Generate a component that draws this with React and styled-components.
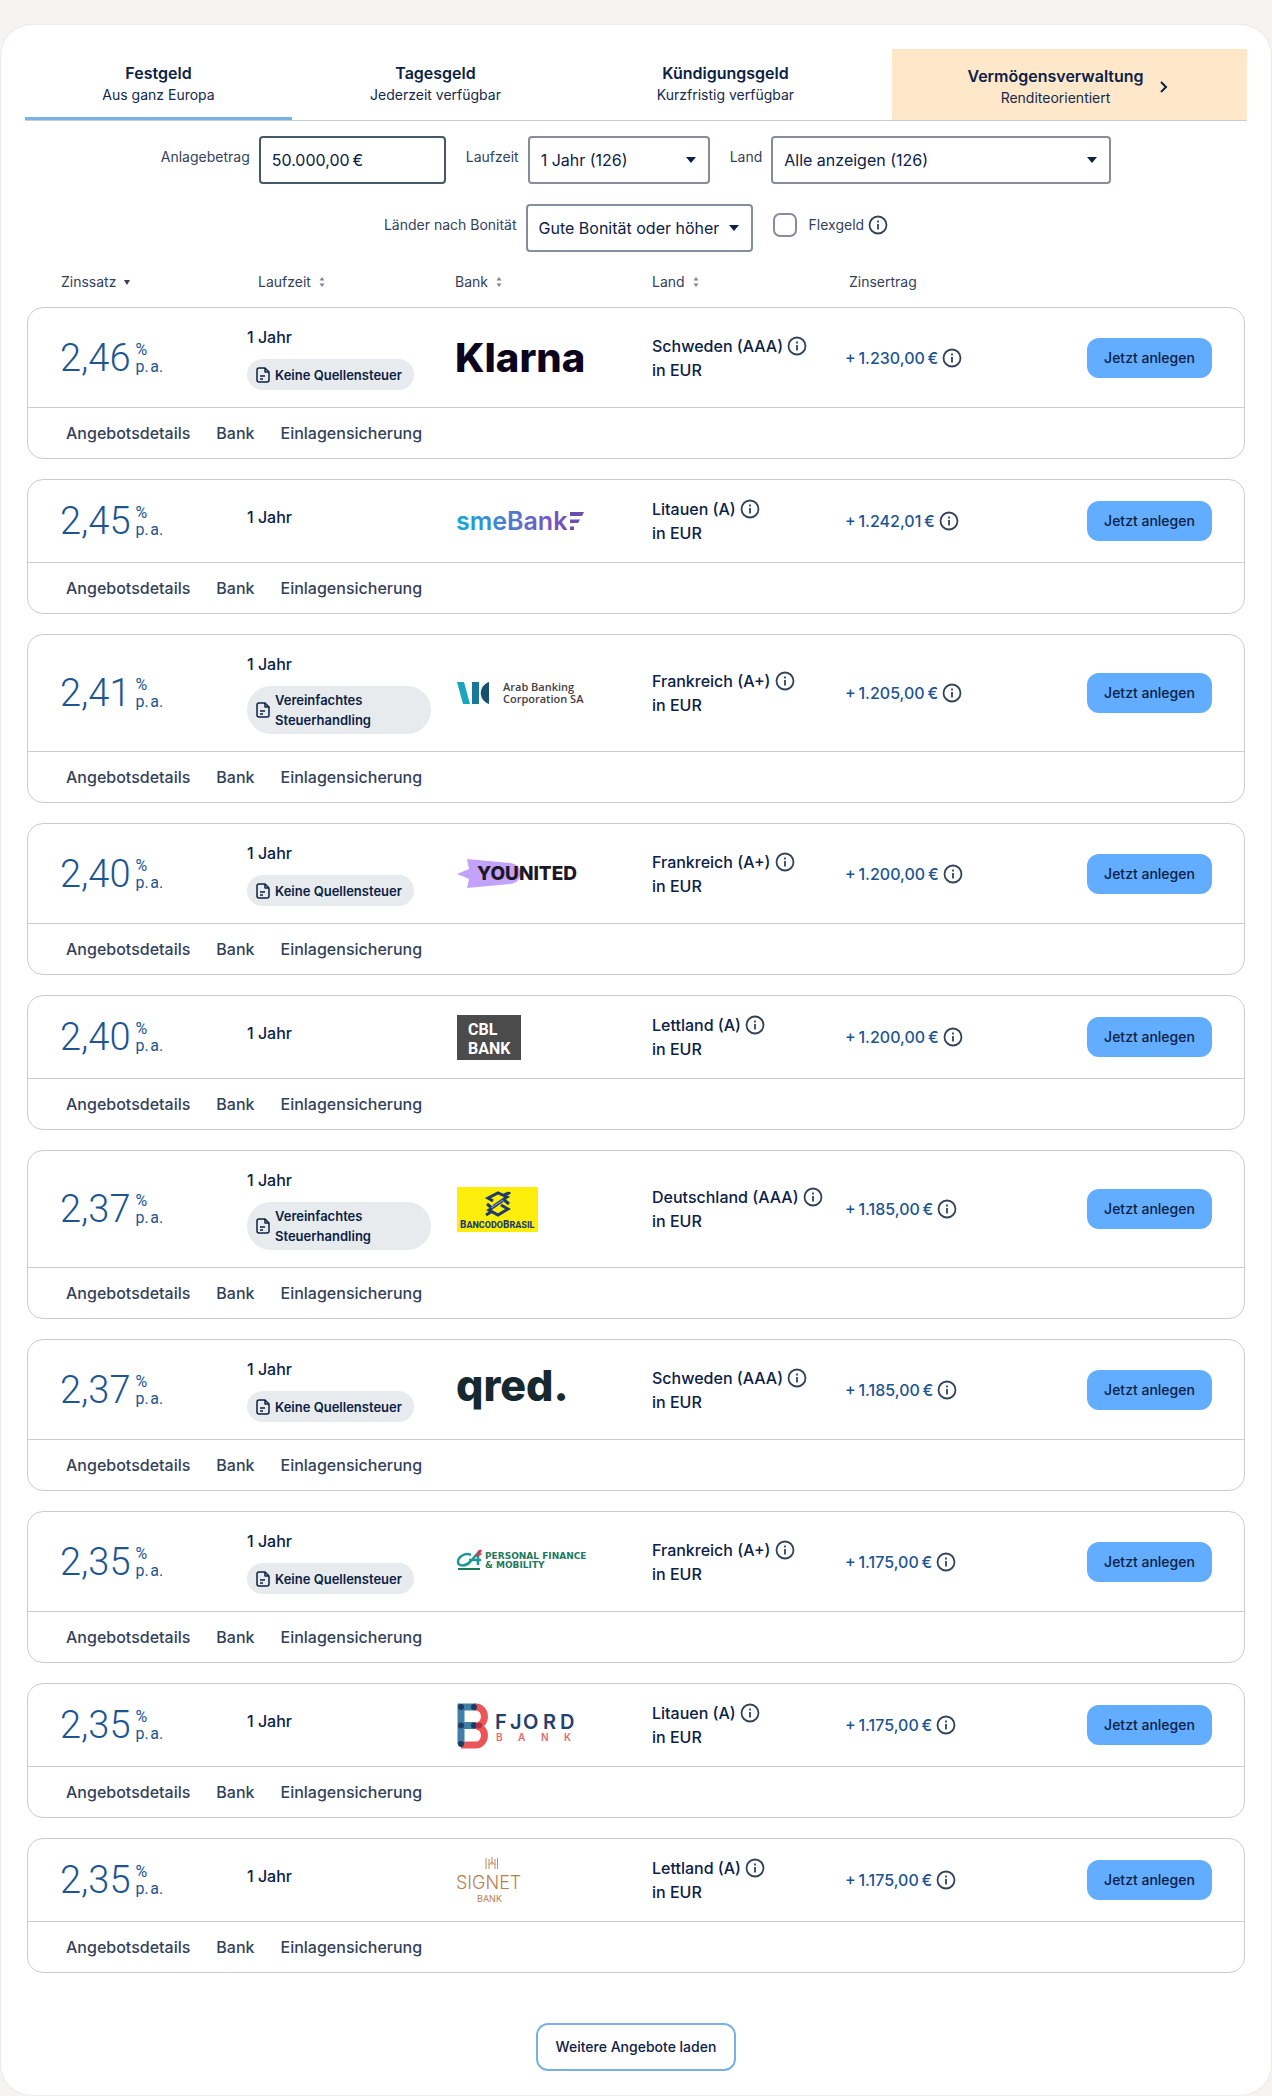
import React, { useState } from 'react'
import styled, { createGlobalStyle, css } from 'styled-components'

const offers = [
  { rate: '2,46', badge: 'Keine Quellensteuer', bank: 'Klarna', country: 'Schweden (AAA)', amount: '+\u20091.230,00\u2009€' },
  { rate: '2,45', bank: 'smeBank', country: 'Litauen (A)', amount: '+\u20091.242,01\u2009€' },
  { rate: '2,41', badge: 'Vereinfachtes Steuerhandling', bank: 'Arab Banking Corporation SA', country: 'Frankreich (A+)', amount: '+\u20091.205,00\u2009€' },
  { rate: '2,40', badge: 'Keine Quellensteuer', bank: 'Younited', country: 'Frankreich (A+)', amount: '+\u20091.200,00\u2009€' },
  { rate: '2,40', bank: 'CBL Bank', country: 'Lettland (A)', amount: '+\u20091.200,00\u2009€' },
  { rate: '2,37', badge: 'Vereinfachtes Steuerhandling', bank: 'Banco do Brasil', country: 'Deutschland (AAA)', amount: '+\u20091.185,00\u2009€' },
  { rate: '2,37', badge: 'Keine Quellensteuer', bank: 'qred', country: 'Schweden (AAA)', amount: '+\u20091.185,00\u2009€' },
  { rate: '2,35', badge: 'Keine Quellensteuer', bank: 'Personal Finance & Mobility', country: 'Frankreich (A+)', amount: '+\u20091.175,00\u2009€' },
  { rate: '2,35', bank: 'Fjord Bank', country: 'Litauen (A)', amount: '+\u20091.175,00\u2009€' },
  { rate: '2,35', bank: 'Signet Bank', country: 'Lettland (A)', amount: '+\u20091.175,00\u2009€' },
]

const tabs = [
  { title: 'Festgeld', text: 'Aus ganz Europa' },
  { title: 'Tagesgeld', text: 'Jederzeit verfügbar' },
  { title: 'Kündigungsgeld', text: 'Kurzfristig verfügbar' },
]

const logos = {
  Klarna: (
    <svg width="132" height="45" viewBox="0 0 132 45">
      <text x="-2" y="37" fontFamily="Inter" fontSize="40" fontWeight="800" fill="#0b051d">Klarna</text>
    </svg>
  ),
  smeBank: (
    <svg width="127" height="45" viewBox="0 0 127 45">
      <defs>
        <linearGradient id="sme" gradientUnits="userSpaceOnUse" x1="0" y1="0" x2="127" y2="0">
          <stop offset="0" stopColor="#12a9da" />
          <stop offset="0.5" stopColor="#5a72cc" />
          <stop offset="0.75" stopColor="#7a55be" />
          <stop offset="1" stopColor="#5e4aa8" />
        </linearGradient>
      </defs>
      <text x="-1" y="31" fontFamily="Inter" fontSize="25" fontWeight="600" fill="url(#sme)">smeBank</text>
      <path d="M113 13h14l-2 4h-12zM117 20.500h6l-2 3.500h-8v-3.500zM113 27.500h4v3.500h-4z" fill="#6a4fb3" />
    </svg>
  ),
  'Arab Banking Corporation SA': (
    <svg width="128" height="45" viewBox="0 0 128 45">
      <path d="M0 11h7l6 22H6z" fill="#1aa5bd" />
      <path d="M15 11h7v22h-7z" fill="#17789a" />
      <path d="M32 11v22C21 29 21 15 32 11z" fill="#15506f" />
      <text x="46" y="20" fontFamily="Open Sans" fontSize="11" fontWeight="600" fill="#45403f">Arab Banking</text>
      <text x="46" y="32" fontFamily="Open Sans" fontSize="11" fontWeight="600" fill="#45403f">Corporation SA</text>
    </svg>
  ),
  Younited: (
    <svg width="130" height="45" viewBox="0 0 130 45">
      <path d="M0 23l12-5-2-10 43 4c14 1 14 20 0 21l-43 4 2-9z" fill="#c3a2fa" />
      <text x="20" y="29" fontFamily="Inter" fontSize="19" fontWeight="800" fill="#1c1826">YOUNITED</text>
    </svg>
  ),
  'CBL Bank': (
    <svg width="64" height="45" viewBox="0 0 64 45">
      <path d="M0 0h64v45H0z" fill="#4b4b4b" />
      <text x="11" y="20" fontFamily="Roboto" fontSize="16" fontWeight="700" fill="#fff">CBL</text>
      <text x="11" y="39" fontFamily="Roboto" fontSize="16" fontWeight="700" fill="#fff">BANK</text>
    </svg>
  ),
  'Banco do Brasil': (
    <svg width="81" height="45" viewBox="0 0 81 45">
      <path d="M0 0h81v45H0z" fill="#fcee0a" />
      <g fill="none" stroke="#1f3a6e" strokeWidth="3">
        <path d="M36 14l-5-3 10-5 9 4-13 9" />
        <path d="M44 18l7 4-10 6-9-5 13-9" />
        <path d="M47 8l5-2v-1M34 25l-5 3" />
        <path d="M30 17l5 4M46 12l6 5" />
      </g>
      <path d="M34 21l12-8" stroke="#6d8fbf" strokeWidth="1.500" />
      <text x="3" y="41" fontFamily="Roboto" fontWeight="800" fill="#1f3a6e">
        <tspan fontSize="10">B</tspan><tspan fontSize="9">ANCODO</tspan><tspan fontSize="10">B</tspan><tspan fontSize="9">RASIL</tspan>
      </text>
    </svg>
  ),
  qred: (
    <svg width="127" height="46" viewBox="0 0 127 46">
      <text x="-1" y="34" fontFamily="Inter" fontSize="43" fontWeight="800" fill="#15292e">qred.</text>
    </svg>
  ),
  'Personal Finance & Mobility': (
    <svg width="130" height="45" viewBox="0 0 130 45">
      <path d="M14 16c-6-3-13 2-13 7 0 4 7 5 12 0l8-9v12M12 21h12" fill="none" stroke="#1a9a96" strokeWidth="2.500" />
      <path d="M20 14c1-3 3-4 5-3l-2 4z" fill="#e0304a" />
      <path d="M18 16l7-2-1 2-6 2z" fill="#e0304a" />
      <path d="M1 29h22v2H1z" fill="#1d7a5c" />
      <text x="28" y="20" fontFamily="DejaVu Sans" fontSize="9" fontWeight="700" fill="#1d7a5c">PERSONAL FINANCE</text>
      <text x="28" y="29" fontFamily="DejaVu Sans" fontSize="9" fontWeight="700" fill="#1d7a5c">&amp; MOBILITY</text>
    </svg>
  ),
  'Fjord Bank': (
    <svg width="127" height="45" viewBox="0 0 127 45">
      <g fill="none" strokeWidth="7">
        <path d="M17 4h2a8 9 0 0 1 0 19 8 9 0 0 1 0 19H4" stroke="#ec5558" />
        <path d="M19 4H4v37M4 22.500h15" stroke="#3f7fa8" />
      </g>
      <g fill="#1c3c63">
        <circle cx="4" cy="4" r="3" />
        <circle cx="17" cy="4" r="3" />
        <circle cx="4" cy="22.500" r="3" />
        <circle cx="17" cy="22.500" r="3" />
        <circle cx="4" cy="41" r="3" />
      </g>
      <circle cx="22" cy="22.500" r="3" fill="#b92e45" />
      <text x="38 53 66 86 103" y="26" fontFamily="Inter" fontSize="20" fontWeight="600" fill="#24406b">FJORD</text>
      <text x="39 61 84 107" y="38" fontFamily="Inter" fontSize="10" fontWeight="600" fill="#e8696c">BANK</text>
    </svg>
  ),
  'Signet Bank': (
    <svg width="127" height="46" viewBox="0 0 127 46">
      <path d="M29 1v11M32 2v10M35 0v8M38 2v10M40.500 1v11M32 8l3-3 3 3" stroke="#c08a5c" strokeWidth="1" fill="none" />
      <text x="-1" y="32" fontFamily="Inter" fontSize="18" fontWeight="300" fill="#b87f50">SIGNET</text>
      <text x="20" y="45" fontFamily="Inter" fontSize="9" fontWeight="400" fill="#b87f50">BANK</text>
    </svg>
  ),
}

const InfoIcon = () => (
  <svg width="20" height="20" viewBox="0 0 20 20" fill="none" stroke="#33425a" strokeWidth="1.800">
    <circle cx="10" cy="10" r="8.500" />
    <path d="M10 9v5.500M10 5.500v2" />
  </svg>
)

const DocIcon = () => (
  <svg width="14" height="16" viewBox="0 0 14 16" fill="none" stroke="#0b2145" strokeWidth="1.500" strokeLinejoin="round">
    <path d="M1 3a2 2 0 0 1 2-2h6l4 4v8a2 2 0 0 1-2 2H3a2 2 0 0 1-2-2z" />
    <path d="M9 1v4h4M4 9h5M4 12h3" />
  </svg>
)

const SortIcon = () => (
  <svg width="6" height="12" viewBox="0 0 6 12" fill="#7b8696">
    <path d="M3 1l2.500 3.500h-5zM3 11L.5 7.500h5z" />
  </svg>
)

const Select = ({ id, value, width }) => (
  <SelectBox $width={width}>
    <select id={id} defaultValue={value}>
      <option>{value}</option>
    </select>
    <svg width="10" height="6" viewBox="0 0 10 6" fill="#0b2145">
      <path d="M0 0h10L5 6z" />
    </svg>
  </SelectBox>
)

const Offer = ({ offer }) => (
  <Card>
    <CardTop>
      <Rate>
        {offer.rate}
        <Unit>
          <span>%</span>
          <span>p.&#8202;a.</span>
        </Unit>
      </Rate>
      <Term>
        <p>1 Jahr</p>
        {offer.badge && (
          <Badge>
            <DocIcon />
            <span>{offer.badge}</span>
          </Badge>
        )}
      </Term>
      <Logo aria-label={offer.bank}>{logos[offer.bank]}</Logo>
      <Country>
        <span>
          {offer.country}
          <InfoButton type="button" aria-label="Info zum Land"><InfoIcon /></InfoButton>
        </span>
        <span>in EUR</span>
      </Country>
      <Amount>
        {offer.amount}
        <InfoButton type="button" aria-label="Info zum Zinsertrag"><InfoIcon /></InfoButton>
      </Amount>
      <InvestButton type="button">Jetzt anlegen</InvestButton>
    </CardTop>
    <CardLinks>
      <a href="#details">Angebotsdetails</a>
      <a href="#bank">Bank</a>
      <a href="#sicherung">Einlagensicherung</a>
    </CardLinks>
  </Card>
)

export default function App() {
  const [active, setActive] = useState(0)
  const [amount, setAmount] = useState('50.000,00\u2009€')
  return (
    <>
      <GlobalStyle />
      <Panel>
        <Tabs>
          {tabs.map((tab, i) => (
            <Tab key={tab.title} type="button" $active={i === active} onClick={() => setActive(i)}>
              <strong>{tab.title}</strong>
              <span>{tab.text}</span>
            </Tab>
          ))}
          <PromoTab href="#vermoegen">
            <div>
              <strong>Vermögensverwaltung</strong>
              <span>Renditeorientiert</span>
            </div>
            <svg width="8" height="12" viewBox="0 0 8 12" fill="none" stroke="#0b2145" strokeWidth="2">
              <path d="M1 1l5 5-5 5" />
            </svg>
          </PromoTab>
        </Tabs>

        <Filters>
          <FilterRow>
            <Field>
              <label htmlFor="betrag">Anlagebetrag</label>
              <AmountInput id="betrag" value={amount} onChange={(e) => setAmount(e.target.value)} />
            </Field>
            <Field>
              <label htmlFor="laufzeit">Laufzeit</label>
              <Select id="laufzeit" value="1 Jahr (126)" width={182} />
            </Field>
            <Field>
              <label htmlFor="land">Land</label>
              <Select id="land" value="Alle anzeigen (126)" width={340} />
            </Field>
          </FilterRow>
          <FilterRow>
            <Field>
              <label htmlFor="bonitaet">Länder nach Bonität</label>
              <Select id="bonitaet" value="Gute Bonität oder höher" width={227} />
            </Field>
            <CheckField>
              <input type="checkbox" id="flexgeld" />
              <label htmlFor="flexgeld">Flexgeld</label>
              <InfoButton type="button" aria-label="Info zu Flexgeld"><InfoIcon /></InfoButton>
            </CheckField>
          </FilterRow>
        </Filters>

        <ListHead>
          <SortButton type="button">
            Zinssatz
            <svg width="6" height="5" viewBox="0 0 6 5" fill="#33425a"><path d="M0 0h6L3 5z" /></svg>
          </SortButton>
          <SortButton type="button">Laufzeit <SortIcon /></SortButton>
          <SortButton type="button">Bank <SortIcon /></SortButton>
          <SortButton type="button">Land <SortIcon /></SortButton>
          <span>Zinsertrag</span>
        </ListHead>

        <List>
          {offers.map((offer) => (
            <Offer key={offer.bank} offer={offer} />
          ))}
        </List>

        <MoreButton type="button">Weitere Angebote laden</MoreButton>
      </Panel>
    </>
  )
}

const GlobalStyle = createGlobalStyle`
* {
    box-sizing: border-box;
}
body {
    margin: 0;
    background: #f5f4f2;
    color: #0b2145;
    font: 500 16px/24px Inter, sans-serif;
}
button, input, select {
    font: inherit;
    color: inherit;
}
button {
    cursor: pointer;
}
p {
    margin: 0;
}
a {
    color: inherit;
    text-decoration: none;
}
svg {
    display: block;
    flex: none;
    overflow: visible;
}
`;

const Panel = styled.main`
margin-top: 24px;
padding: 24px;
display: flex;
flex-direction: column;
background: #fff;
border: 1px solid #ebebeb;
border-radius: 32px;
`;

const Tabs = styled.nav`
display: grid;
grid-template-columns: 267fr 287fr 313fr 355fr;
border-bottom: 1px solid #c9ced4;
strong, span {
    display: block;
}
strong {
    font-size: 16px;
    font-weight: 600;
    line-height: 22px;
}
span {
    font-size: 14px;
    font-weight: 400;
    line-height: 22px;
    color: #14294b;
}
`;

const Tab = styled.button`
height: 71px;
padding: 12px 0 10px;
background: none;
border: 0;
border-bottom: 3px solid ${({ $active }) => ($active ? '#7ab1e5' : 'transparent')};
&:nth-child(3) {
    padding-right: 20px;
}
`;

const PromoTab = styled.a`
display: flex;
align-items: center;
justify-content: center;
gap: 16px;
padding: 4px 4px 0 0;
text-align: center;
background: #ffe8ca;
`;

const Filters = styled.div`
display: flex;
flex-direction: column;
gap: 20px;
padding-top: 15px;
`;

const FilterRow = styled.div`
display: flex;
justify-content: center;
gap: 20px;
`;

const labelText = css`
font-size: 14px;
font-weight: 400;
line-height: 20px;
color: #33425a;
`;

const Field = styled.div`
display: flex;
align-items: center;
gap: 9px;
label {
    ${labelText}
    padding-bottom: 6px;
}
`;

const CheckField = styled.div`
display: flex;
align-items: center;
padding-bottom: 6px;
label {
    ${labelText}
    margin-left: 12px;
}
input {
    appearance: none;
    width: 24px;
    height: 24px;
    margin: 0;
    border: 2px solid #868c9b;
    border-radius: 7px;
    background: #fff;
}
input:checked {
    background: #62adff;
}
`;

const AmountInput = styled.input`
width: 187px;
height: 48px;
padding: 0 11px;
border: 2px solid #46566b;
border-radius: 4px;
background: #fff;
font-weight: 400;
`;

const SelectBox = styled.div`
position: relative;
width: ${({ $width }) => $width}px;
select {
    appearance: none;
    width: 100%;
    height: 48px;
    padding: 0 11px;
    border: 2px solid #868c9b;
    border-radius: 4px;
    background: #fff;
    font-weight: 400;
}
svg {
    position: absolute;
    top: 21px;
    right: 14px;
    pointer-events: none;
}
`;

const ListHead = styled.div`
display: grid;
grid-template-columns: repeat(6, 1fr);
margin: 20px 4px 0 36px;
font-size: 14px;
font-weight: 400;
line-height: 20px;
color: #33425a;
`;

const SortButton = styled.button`
display: flex;
align-items: center;
gap: 8px;
padding: 0;
background: none;
border: 0;
`;

const List = styled.div`
display: flex;
flex-direction: column;
gap: 20px;
margin: 15px 2px 0;
`;

const Card = styled.article`
border: 1px solid #cbcdd0;
border-radius: 16px;
`;

const CardTop = styled.div`
display: grid;
grid-template-columns: 187fr 210fr 195fr 193fr 242fr 125fr;
align-items: center;
min-height: 82px;
padding: 17px 32px;
`;

const Rate = styled.div`
display: flex;
align-items: center;
gap: 5px;
font-family: Roboto, sans-serif;
font-size: 38px;
font-weight: 300;
line-height: 40px;
color: #1d5590;
`;

const Unit = styled.span`
display: flex;
flex-direction: column;
font-size: 16px;
font-weight: 400;
line-height: 17px;
`;

const Term = styled.div`
padding-right: 26px;
p {
    margin-bottom: 8px;
}
`;

const Badge = styled.div`
display: flex;
align-items: center;
gap: 5px;
width: fit-content;
min-height: 31px;
margin-top: 10px;
padding: 4px 12px 4px 9px;
border-radius: 24px;
background: #e8ebee;
font-size: 13px;
font-weight: 600;
line-height: 20px;
`;

const Logo = styled.div`
display: flex;
`;

const Country = styled.div`
display: flex;
flex-direction: column;
span {
    display: flex;
    align-items: center;
    white-space: nowrap;
}
`;

const InfoButton = styled.button`
display: inline-flex;
margin-left: 4px;
padding: 0;
background: none;
border: 0;
`;

const Amount = styled.div`
display: flex;
align-items: center;
white-space: nowrap;
color: #1d5590;
`;

const InvestButton = styled.button`
height: 40px;
padding: 0;
background: #62adff;
border: 0;
border-radius: 12px;
font-size: 14px;
`;

const CardLinks = styled.div`
display: flex;
gap: 26px;
padding: 13px 38px;
border-top: 1px solid #cbcdd0;
color: #33425a;
`;

const MoreButton = styled.button`
align-self: center;
height: 48px;
margin-top: 50px;
padding: 0 18px;
background: #fff;
border: 2px solid #7ab1e5;
border-radius: 12px;
font-size: 14px;
`;
